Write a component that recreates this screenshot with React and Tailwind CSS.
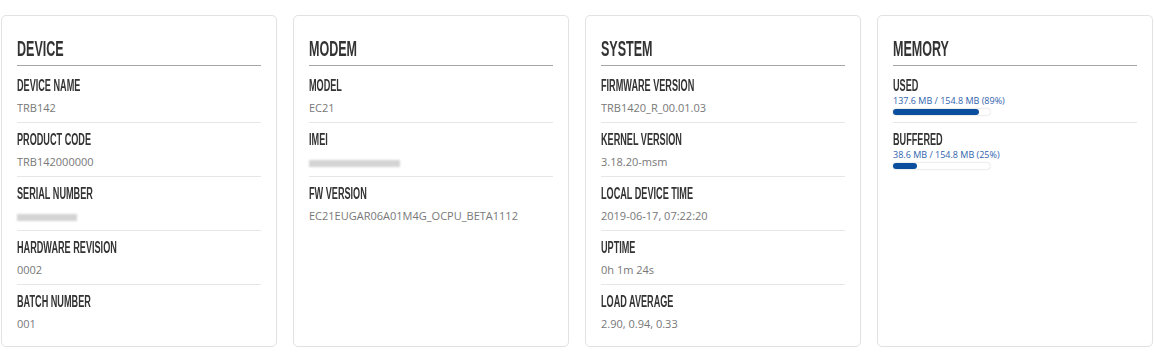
import React from "react";

const HEAD = "[font-family:'Liberation_Sans','Arial',sans-serif]";

function Blur({ w }) {
  return (
    <span
      className="inline-block h-[7px] bg-[#d4d4d4] blur-[1px] align-middle"
      style={{ width: w }}
    />
  );
}

function Label({ children, tight }) {
  return (
    <div
      className={
        tight
          ? `${HEAD} h-[17px] origin-left scale-x-[0.57] whitespace-nowrap text-[16px] leading-[17px] font-bold text-[#333]`
          : `${HEAD} h-[18px] origin-left scale-x-[0.57] whitespace-nowrap text-[16px] leading-[18px] font-bold text-[#333]`
      }
    >
      {children}
    </div>
  );
}

function Row({ label, value, last }) {
  return (
    <div className={last ? "pt-[8px] pb-[6px]" : "pt-[8px] pb-[6px] border-b border-[#e6e6e6]"}>
      <Label>{label}</Label>
      <div className="mt-[5px] h-[16px] text-[11px] leading-[16px] text-[#787878] [font-family:'Open_Sans',sans-serif] whitespace-nowrap">
        {value}
      </div>
    </div>
  );
}

function MemRow({ label, text, pct, last }) {
  return (
    <div className={last ? "h-[53px] pt-[8px]" : "h-[54px] pt-[8px] border-b border-[#e6e6e6]"}>
      <Label tight>{label}</Label>
      <div className="mt-[1px] h-[11px] text-[9px] leading-[11px] text-[#2f62ad] [font-family:'Open_Sans',sans-serif] whitespace-nowrap">
        {text}
      </div>
      <div className="mt-[3px] w-[97px] h-[6px] rounded-full bg-white shadow-[0_0_2px_rgba(0,0,0,0.25)]">
        <div className="h-full rounded-full bg-[#0a4e9e]" style={{ width: `${pct}%` }} />
      </div>
    </div>
  );
}

function Card({ title, children }) {
  return (
    <div className="rounded-[5px] border border-[#e2e2e2] bg-white px-[15px] pb-[8px]">
      <div className="pt-[21px] pb-[4px] border-b border-[#a6a6a6] mb-[3px]">
        <div
          className={`${HEAD} h-[24px] origin-left scale-x-[0.57] whitespace-nowrap text-[22px] leading-[24px] font-bold text-[#333]`}
        >
          {title}
        </div>
      </div>
      {children}
    </div>
  );
}

export default function App() {
  return (
    <div className="w-[1154px] h-[363px] bg-white pt-[15px] px-px">
      <div className="grid grid-cols-4 gap-4">
        <Card title="DEVICE">
          <Row label="DEVICE NAME" value="TRB142" />
          <Row label="PRODUCT CODE" value="TRB142000000" />
          <Row label="SERIAL NUMBER" value={<Blur w={60} />} />
          <Row label="HARDWARE REVISION" value="0002" />
          <Row label="BATCH NUMBER" value="001" last />
        </Card>
        <Card title="MODEM">
          <Row label="MODEL" value="EC21" />
          <Row label="IMEI" value={<Blur w={91} />} />
          <Row label="FW VERSION" value="EC21EUGAR06A01M4G_OCPU_BETA1112" last />
        </Card>
        <Card title="SYSTEM">
          <Row label="FIRMWARE VERSION" value="TRB1420_R_00.01.03" />
          <Row label="KERNEL VERSION" value="3.18.20-msm" />
          <Row label="LOCAL DEVICE TIME" value="2019-06-17, 07:22:20" />
          <Row label="UPTIME" value="0h 1m 24s" />
          <Row label="LOAD AVERAGE" value="2.90, 0.94, 0.33" last />
        </Card>
        <Card title="MEMORY">
          <MemRow label="USED" text="137.6 MB / 154.8 MB (89%)" pct={89} />
          <MemRow label="BUFFERED" text="38.6 MB / 154.8 MB (25%)" pct={25} last />
        </Card>
      </div>
    </div>
  );
}
